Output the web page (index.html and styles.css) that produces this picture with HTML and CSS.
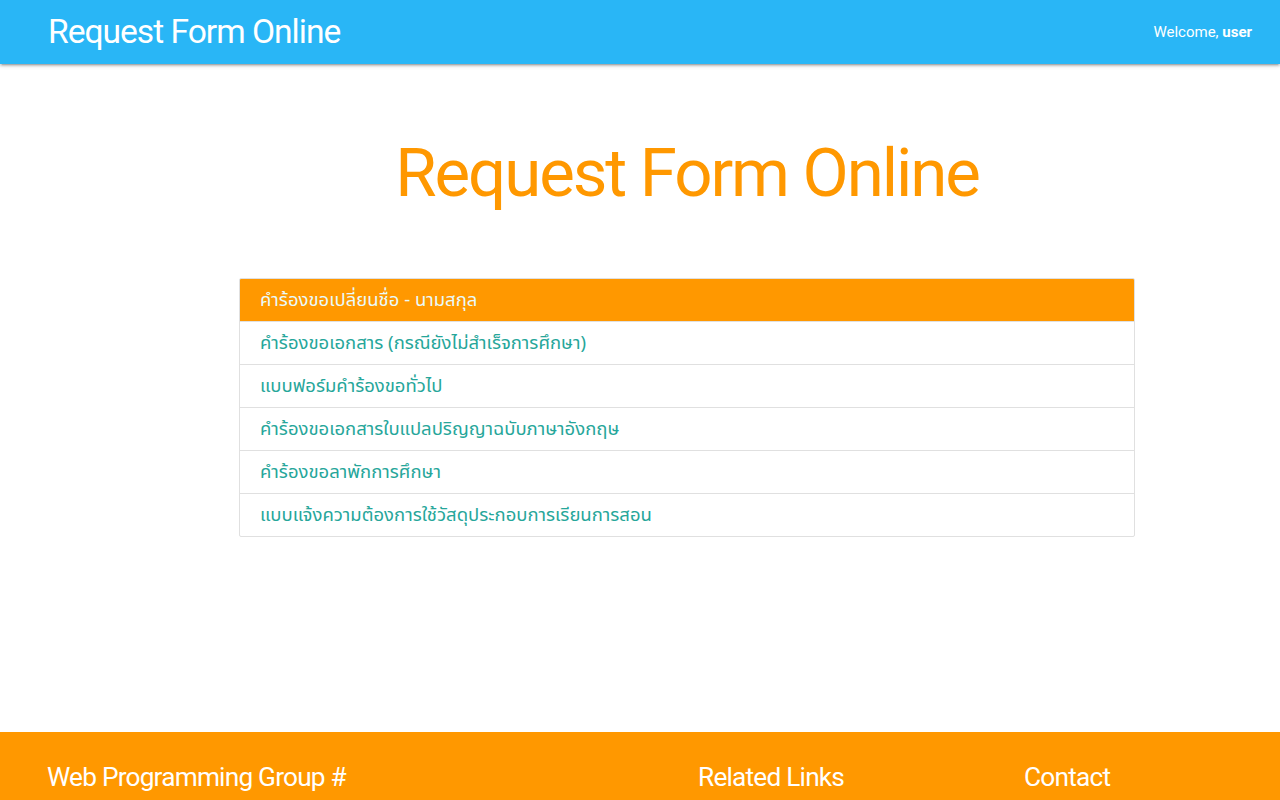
FILE: index.html
```html
<!DOCTYPE html>
<html lang="th">
<head>
<meta charset="utf-8">
<title>Request Form Online</title>
<link rel="stylesheet" href="styles.css">
</head>
<body>
<nav class="navbar">
  <a class="brand" href="#">Request Form Online</a>
  <div class="welcome">Welcome, <b>user</b></div>
</nav>
<main class="main">
  <div class="container">
    <h1 class="title">Request Form Online</h1>
    <div class="collection">
      <a class="item active" href="#">คำร้องขอเปลี่ยนชื่อ - นามสกุล</a>
      <a class="item" href="#">คำร้องขอเอกสาร (กรณียังไม่สำเร็จการศึกษา)</a>
      <a class="item" href="#">แบบฟอร์มคำร้องขอทั่วไป</a>
      <a class="item" href="#">คำร้องขอเอกสารใบแปลปริญญาฉบับภาษาอังกฤษ</a>
      <a class="item" href="#">คำร้องขอลาพักการศึกษา</a>
      <a class="item" href="#">แบบแจ้งความต้องการใช้วัสดุประกอบการเรียนการสอน</a>
    </div>
  </div>
</main>
<footer class="footer">
  <div class="fcol"><h5>Web Programming Group #</h5></div>
  <div class="fcol"><h5>Related Links</h5></div>
  <div class="fcol"><h5>Contact</h5></div>
</footer>
</body>
</html>
```
FILE: styles.css
```css
* { box-sizing: border-box; }
html, body { margin: 0; padding: 0; }
body {
  font-family: Roboto, "Noto Sans", sans-serif;
  background: #fff;
  color: rgba(0,0,0,0.87);
}
.navbar {
  height: 64px;
  background: #29b6f6;
  display: flex;
  align-items: center;
  justify-content: space-between;
  padding: 0 28px 0 48px;
  box-shadow: 0 2px 2px 0 rgba(0,0,0,.14), 0 3px 1px -2px rgba(0,0,0,.12), 0 1px 5px 0 rgba(0,0,0,.2);
  position: relative;
  z-index: 2;
}
.brand {
  color: #fff;
  text-decoration: none;
  font-size: 33.6px;
  letter-spacing: -0.03em;
  line-height: 64px;
}
.welcome {
  color: #fff;
  font-size: 15px;
}
.welcome b { font-weight: 700; }
.main {
  min-height: 668px;
}
.container {
  margin-left: 239px;
  width: 896px;
  padding-top: 72px;
}
.title {
  margin: 0 0 68px;
  text-align: center;
  color: #ff9800;
  font-weight: 400;
  font-size: 67.2px;
  letter-spacing: -0.031em;
  line-height: 74px;
}
.collection {
  border: 1px solid #e0e0e0;
  border-radius: 2px;
  overflow: hidden;
}
.item {
  display: block;
  padding: 9px 20px;
  line-height: 24px;
  height: 43px;
  font-size: 18.5px;
  color: #26a69a;
  text-decoration: none;
  border-bottom: 1px solid #e0e0e0;
  font-family: "Noto Sans Thai", "Kanit", "Noto Sans", sans-serif;
}
.item:last-child { border-bottom: none; height: 42px; }
.item.active {
  background: #ff9800;
  color: #eafaf9;
}
.footer {
  background: #ff9800;
  display: grid;
  grid-template-columns: 651px 326px 1fr;
  padding: 20px 0 20px 47px;
}
.fcol h5 {
  margin: 10px 0 12px;
  color: #fff;
  font-weight: 400;
  font-size: 26.24px;
  letter-spacing: -0.03em;
  line-height: 30px;
}
```
